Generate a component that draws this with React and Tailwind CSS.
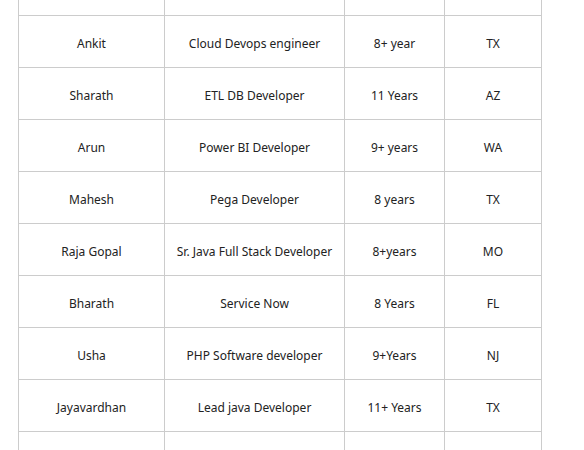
import React from "react";

const rows = [
  ["Ankit", "Cloud Devops engineer", "8+ year", "TX"],
  ["Sharath", "ETL DB Developer", "11 Years", "AZ"],
  ["Arun", "Power BI Developer", "9+ years", "WA"],
  ["Mahesh", "Pega Developer", "8 years", "TX"],
  ["Raja Gopal", "Sr. Java Full Stack Developer", "8+years", "MO"],
  ["Bharath", "Service Now", "8 Years", "FL"],
  ["Usha", "PHP Software developer", "9+Years", "NJ"],
  ["Jayavardhan", "Lead java Developer", "11+ Years", "TX"],
];

function Row({ cells, h }) {
  const widths = ["w-[146px]", "w-[180px]", "w-[100px]", "w-[97px]"];
  return (
    <div className={`flex border-b border-[#cccccc] ${h}`}>
      {widths.map((w, i) => (
        <div
          key={i}
          className={`${w} shrink-0 border-r border-[#cccccc] flex items-center justify-center text-center pt-[5px]`}
        >
          {cells ? cells[i] : ""}
        </div>
      ))}
    </div>
  );
}

export default function App() {
  return (
    <div className="w-[584px] h-[450px] overflow-hidden bg-white">
      <div
        className="ml-[18px] w-[524px] border-l border-[#cccccc] text-[12px] text-[#222222]"
        style={{ fontFamily: '"Noto Sans", "Open Sans", sans-serif' }}
      >
        <Row h="h-[16px]" />
        {rows.map((r, i) => (
          <Row key={i} cells={r} h="h-[52px]" />
        ))}
        <Row h="h-[52px]" />
      </div>
    </div>
  );
}
